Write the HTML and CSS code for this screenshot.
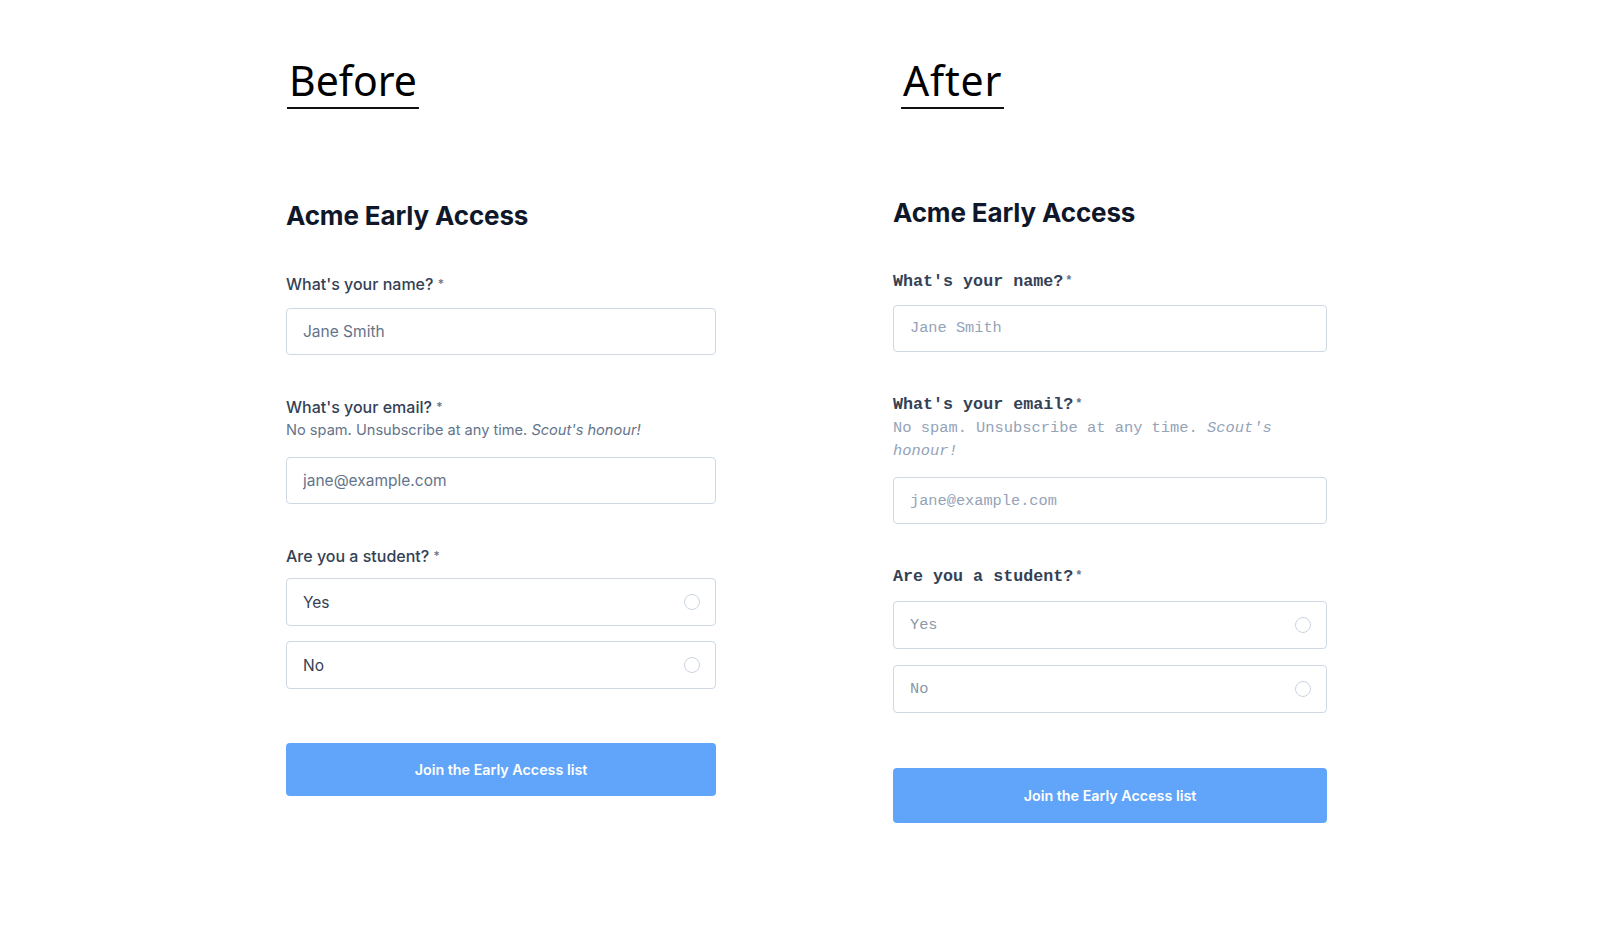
FILE: index.html
```html
<!DOCTYPE html>
<html lang="en">

<head>
    <meta charset="UTF-8">
    <meta name="viewport" content="width=device-width, initial-scale=1.0">
    <title>Before / After</title>
    <link rel="stylesheet" href="styles.css">
</head>

<body>
    <div class="page">
        <section class="panel panel-before">
            <h1 class="tag">Before</h1>

            <form class="form">
                <h2 class="form-title">Acme Early Access</h2>

                <div class="field">
                    <div class="field-head">
                        <label class="field-label" for="name-a">What's your name? <span class="req">*</span></label>
                    </div>
                    <input class="text-input" id="name-a" type="text" placeholder="Jane Smith">
                </div>

                <div class="field">
                    <div class="field-head">
                        <label class="field-label" for="email-a">What's your email? <span class="req">*</span></label>
                        <p class="field-hint">No spam. Unsubscribe at any time. <em>Scout's honour!</em></p>
                    </div>
                    <input class="text-input" id="email-a" type="email" placeholder="jane@example.com">
                </div>

                <div class="field field-choices">
                    <div class="field-head">
                        <span class="field-label">Are you a student? <span class="req">*</span></span>
                    </div>
                    <label class="choice">
                        <span>Yes</span>
                        <input type="radio" name="student-a" value="yes">
                    </label>
                    <label class="choice">
                        <span>No</span>
                        <input type="radio" name="student-a" value="no">
                    </label>
                </div>

                <button class="submit" type="button">Join the Early Access list</button>
            </form>
        </section>

        <section class="panel panel-after">
            <h1 class="tag">After</h1>

            <form class="form form-mono">
                <h2 class="form-title">Acme Early Access</h2>

                <div class="field">
                    <div class="field-head">
                        <label class="field-label" for="name-b">What's your name?<span class="req">*</span></label>
                    </div>
                    <input class="text-input" id="name-b" type="text" placeholder="Jane Smith">
                </div>

                <div class="field">
                    <div class="field-head">
                        <label class="field-label" for="email-b">What's your email?<span class="req">*</span></label>
                        <p class="field-hint">No spam. Unsubscribe at any time. <em>Scout's</em> <em>honour!</em></p>
                    </div>
                    <input class="text-input" id="email-b" type="email" placeholder="jane@example.com">
                </div>

                <div class="field field-choices">
                    <div class="field-head">
                        <span class="field-label">Are you a student?<span class="req">*</span></span>
                    </div>
                    <label class="choice">
                        <span>Yes</span>
                        <input type="radio" name="student-b" value="yes">
                    </label>
                    <label class="choice">
                        <span>No</span>
                        <input type="radio" name="student-b" value="no">
                    </label>
                </div>

                <button class="submit" type="button">Join the Early Access list</button>
            </form>
        </section>
    </div>
</body>

</html>
```

FILE: styles.css
```css
body {
    margin: 0;
    font-family: 'Inter', sans-serif;
    background-color: #ffffff;
}

.page {
    display: flex;
    gap: 177px;
    padding: 57px 0 0 286px;
}

.panel {
    display: flex;
    flex-direction: column;
    align-items: flex-start;
}

.panel-before {
    width: 430px;
}

.panel-after {
    width: 434px;
}

/* Before / After captions */
.tag {
    margin: 0;
    padding: 0 2px 4px;
    font-family: 'Noto Sans', sans-serif;
    font-size: 41px;
    font-weight: 400;
    line-height: 46px;
    color: #000000;
    border-bottom: 2px solid #111111;
}

.panel-before .tag {
    margin-left: 1px;
}

.panel-after .tag {
    margin-left: 8px;
    letter-spacing: 0.02em;
}

.form {
    width: 100%;
    margin-top: 91px;
}

.form-mono {
    margin-top: 88px;
}

.form-title {
    margin: 0 0 40px;
    font-size: 26px;
    font-weight: 700;
    line-height: 32px;
    letter-spacing: -0.005em;
    color: #0f172a;
}

.field {
    display: flex;
    flex-direction: column;
    margin-bottom: 40px;
}

.field-head {
    display: flex;
    flex-direction: column;
    margin-bottom: 12px;
}

.field-choices .field-head {
    margin-bottom: 10px;
}

.field-label {
    font-size: 16px;
    font-weight: 500;
    line-height: 24px;
    color: #334155;
}

.req {
    font-size: 12px;
    color: #64748b;
    vertical-align: 2px;
}

.field-hint {
    margin: 0 0 4px;
    font-size: 14.6px;
    line-height: 22px;
    color: #64748b;
}

.text-input {
    box-sizing: border-box;
    width: 100%;
    height: 47px;
    padding: 0 16px;
    font-family: inherit;
    font-size: 15.5px;
    color: #334155;
    border: 1px solid #cfd8e3;
    border-radius: 4px;
    outline: none;
}

.text-input::placeholder {
    color: #64748b;
}

.choice {
    box-sizing: border-box;
    display: flex;
    justify-content: space-between;
    align-items: center;
    height: 48px;
    padding: 0 15px 0 16px;
    margin-bottom: 15px;
    font-size: 15.5px;
    color: #334155;
    border: 1px solid #cfd8e3;
    border-radius: 4px;
    cursor: pointer;
}

.choice:last-child {
    margin-bottom: 0;
}

.choice input {
    appearance: none;
    width: 16px;
    height: 16px;
    margin: 0;
    border: 1px solid #cbd5e1;
    border-radius: 50%;
}

.submit {
    display: block;
    width: 100%;
    height: 53px;
    margin-top: 54px;
    font-family: inherit;
    font-size: 14.3px;
    font-weight: 600;
    color: #ffffff;
    background-color: #60a5fa;
    border: none;
    border-radius: 4px;
    cursor: pointer;
}

/* After: monospace body copy */
.form-mono .field-label {
    font-family: 'Liberation Mono', 'Courier New', monospace;
    font-size: 16.7px;
    font-weight: 700;
}

.form-mono .field-head {
    margin-bottom: 10.5px;
}

.form-mono .field-choices .field-head {
    margin-bottom: 11.5px;
}

.form-mono .field-hint {
    font-family: 'Liberation Mono', 'Courier New', monospace;
    font-size: 15.4px;
    line-height: 23px;
    color: #94a3b8;
}

.form-mono .req {
    margin-left: 2px;
}

.form-mono .text-input,
.form-mono .choice {
    font-family: 'Liberation Mono', 'Courier New', monospace;
    font-size: 15.3px;
}

.form-mono .text-input::placeholder {
    color: #94a3b8;
}

.form-mono .choice {
    margin-bottom: 16px;
    color: #8b97a8;
}

.form-mono .choice:last-child {
    margin-bottom: 0;
}

.form-mono .submit {
    height: 55px;
    margin-top: 55px;
}
```
